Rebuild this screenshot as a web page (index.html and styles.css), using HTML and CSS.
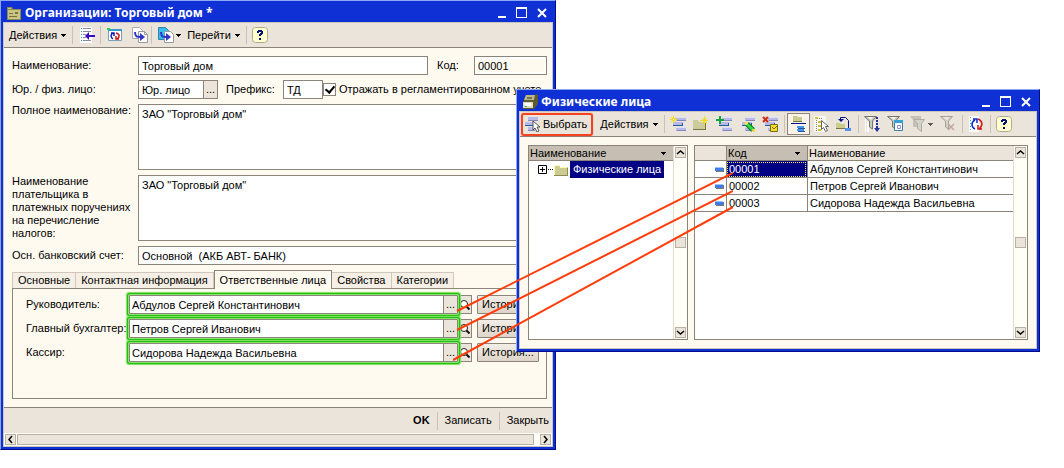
FILE: index.html
```html
<!DOCTYPE html>
<html lang="ru">
<head>
<meta charset="utf-8">
<title>Организации: Торговый дом</title>
<link rel="stylesheet" href="styles.css">
</head>
<body>
<svg class="defs" aria-hidden="true">
  <symbol id="folder" viewBox="0 0 16 16"><path d="M1 3h5l1 2h8v9H1z" fill="#cbcb92"/><path d="M1 3h5v1H1zM1 4h1v9H1zM7 5h7v1H7z" fill="#ffffae"/><path d="M1 13h14v1H1zM14 6h1v8h-1z" fill="#8b8b58"/></symbol>
  <symbol id="item" viewBox="0 0 16 16"><path d="M6 1h10v4H6zM6 11h10v4H6z" fill="#b9b9e9"/><path d="M6 1h10v1H6zM6 11h10v1H6z" fill="#dedefd"/><path d="M7 4h9v1H7zM7 14h9v1H7z" fill="#8584bb"/><path d="M3 6h10v4H3z" fill="#b8b8e8"/><path d="M3 9h10v1H3zM12 7h1v3h-1z" fill="#1e5c9c"/></symbol>
  <symbol id="page" viewBox="0 0 16 16"><path d="M.5.5h7l3 3v8H.5z" fill="#fff" stroke="#aaa" /><path d="M6.500 4.500h6l3 3v8h-9z" fill="#fff" stroke="#999"/><path d="M12.500 4.500v3h3" fill="none" stroke="#999"/><path d="M3 5c0 5 2 5 6 5" fill="none" stroke="#3036c9" stroke-width="2"/><path d="M8 6l5 4-5 4z" fill="#3036c9"/></symbol>
  <symbol id="funnel" viewBox="0 0 16 16"><path d="M.5.5h12L8.500 5v8l-3-2V5z" fill="#c9c8c1" stroke="#77766c"/><path d="M3 1h6L7 4z" fill="#f3f2ed"/></symbol>
  <symbol id="help" viewBox="0 0 16 16"><rect x=".5" y=".5" width="15" height="15" rx="3" fill="#ffffca" stroke="#aaa99c"/><path d="M5 6V4h1V3h4v1h1v3h-1v1H9v1H7V7h1V6h1V5H7v1zM7 11h2v2H7z" fill="#001276"/></symbol>
  <symbol id="refresh" viewBox="0 0 16 16"><path d="M7 13C3 11 3 6 7 4M5 3h4v4" fill="none" stroke="#0a25d0" stroke-width="1.500"/><path d="M10 3c5 2 5 7 1 10M14 13h-4V9" fill="none" stroke="#d01414" stroke-width="1.500"/></symbol>
  <symbol id="down" viewBox="0 0 5 3"><path d="M0 0h5v1H4v1H3v1H2V2H1V1H0z" fill="currentColor"/></symbol>
  <symbol id="loupe" viewBox="0 0 12 12"><circle cx="5" cy="5" r="3.500" fill="#fff" stroke="#222"/><path d="M7.500 7.500l3 3" stroke="#111" stroke-width="2"/></symbol>
  <symbol id="bullet" viewBox="0 0 9 5"><path d="M1 1h8v4H1z" fill="#777"/><path d="M0 0h8v4H0z" fill="#3f7ce8"/><path d="M0 0h8v1H0z" fill="#9cc6ff"/></symbol>
  <symbol id="min" viewBox="0 0 12 12"><path d="M2 9h8v2H2z" fill="#fff"/></symbol>
  <symbol id="max" viewBox="0 0 12 12"><path d="M0 0h11v11H0zM1 2v8h9V2z" fill="#fff" fill-rule="evenodd"/></symbol>
  <symbol id="close" viewBox="0 0 12 12"><path d="M2 2l8 8M10 2l-8 8" stroke="#fff" stroke-width="2"/></symbol>
</svg>

<main class="desktop">
  <section class="window window-org" aria-label="Организации">
    <header class="titlebar">
      <svg class="icon" viewBox="0 0 16 16"><path d="M1 2h5l1 2h8v11H1z" fill="#8f8b4b"/><path d="M2 3h3v1H2zM2 5h12v9H2z" fill="#c7c484"/><path d="M3 8h4v1H3zM3 11h8v1H3zM9 7h3v2H9z" fill="#77743b"/></svg>
      <h1>Организации: Торговый дом *</h1>
      <div class="controls">
        <button aria-label="Свернуть"><svg><use href="#min"/></svg></button>
        <button aria-label="Развернуть"><svg><use href="#max"/></svg></button>
        <button aria-label="Закрыть окно"><svg><use href="#close"/></svg></button>
      </div>
    </header>
    <div class="client">
      <div class="toolbar">
        <button class="menu">Действия<svg class="arrow"><use href="#down"/></svg></button>
        <i class="sep"></i>
        <button class="tool" aria-label="Найти в списке"><svg class="icon" viewBox="0 0 16 16"><path d="M1 0h12v16H1z" fill="#fff"/><path d="M2 1h1v1H2zM2 4h1v1H2zM2 7h1v1H2zM2 10h1v1H2zM2 13h1v1H2z" fill="#16a0d0"/><path d="M4 1h8v1H4zM4 4h8v1H4zM4 7h3v1H4zM4 10h3v1H4zM4 13h8v1H4z" fill="#8b8b9b"/><path d="M16 8v2h-6v3L6 9l4-4v3z" fill="#3709c5"/></svg></button>
        <i class="sep"></i>
        <button class="tool" aria-label="Перечитать"><svg class="icon" viewBox="0 0 16 16"><path d="M1.500 2.500h13v11h-13z" fill="#fff" stroke="#77a0bb"/><path d="M1 2h14v2H1z" fill="#369bd0"/><path d="M0 1h3v2H0z" fill="#28d444"/><path d="M6 12C3 10 4 7 6 6M4 6h3v3" fill="none" stroke="#111cc0" stroke-width="1.500"/><path d="M9 6c4 1 4 4 1 6M12 12H9V9" fill="none" stroke="#c91414" stroke-width="1.500"/></svg></button>
        <button class="tool" aria-label="Скопировать"><svg class="icon"><use href="#page"/></svg></button>
        <i class="sep"></i>
        <button class="tool with-arrow" aria-label="Ввести на основании"><svg class="icon" viewBox="0 0 16 16"><path d="M.5.5h7l3 3v9H.5z" fill="#32bcf2" stroke="#3980a5"/><path d="M6.500 4.500h6l3 3v8h-9z" fill="#fff" stroke="#999"/><path d="M3 5c0 5 2 5 5 5" fill="none" stroke="#3036c9" stroke-width="2"/><path d="M8 6l5 4-5 4z" fill="#3036c9"/></svg><svg class="arrow"><use href="#down"/></svg></button>
        <button class="menu">Перейти<svg class="arrow"><use href="#down"/></svg></button>
        <i class="sep"></i>
        <button class="tool" aria-label="Справка"><svg class="icon"><use href="#help"/></svg></button>
      </div>
      <form class="form">
        <div class="row">
          <label class="caption" for="name">Наименование:</label>
          <input class="field grow" id="name" value="Торговый дом">
          <label class="code-label" for="code">Код:</label>
          <input class="field code" id="code" value="00001" readonly>
        </div>
        <div class="row">
          <label class="caption" for="kind">Юр. / физ. лицо:</label>
          <div class="combo kind"><input class="field" id="kind" value="Юр. лицо"><button type="button" class="dots" aria-label="Выбрать вид">...</button></div>
          <label class="prefix-label" for="prefix">Префикс:</label>
          <input class="field prefix" id="prefix" value="ТД">
          <label class="check"><input type="checkbox" checked>Отражать в регламентированном учете</label>
        </div>
        <div class="row">
          <label class="caption top" for="full">Полное наименование:</label>
          <textarea class="field grow" id="full">ЗАО "Торговый дом"</textarea>
        </div>
        <div class="row">
          <label class="caption top" for="payer">Наименование плательщика в платежных поручениях на перечисление налогов:</label>
          <textarea class="field grow" id="payer">ЗАО "Торговый дом"</textarea>
        </div>
        <div class="row">
          <label class="caption" for="bank">Осн. банковский счет:</label>
          <input class="field grow" id="bank" value="Основной  (АКБ АВТ- БАНК)">
        </div>
        <div class="tabs" role="tablist">
          <button type="button" role="tab">Основные</button>
          <button type="button" role="tab">Контактная информация</button>
          <button type="button" role="tab" class="active" aria-selected="true">Ответственные лица</button>
          <button type="button" role="tab">Свойства</button>
          <button type="button" role="tab">Категории</button>
        </div>
        <div class="pane" role="tabpanel">
          <div class="row">
            <label class="caption" for="head">Руководитель:</label>
            <div class="combo marked"><input class="field" id="head" value="Абдулов Сергей Константинович"><button type="button" class="dots" aria-label="Выбрать руководителя">...</button></div>
            <button type="button" class="look" aria-label="Открыть"><svg><use href="#loupe"/></svg></button>
            <button type="button" class="history">История...</button>
          </div>
          <div class="row">
            <label class="caption" for="chief">Главный бухгалтер:</label>
            <div class="combo marked"><input class="field" id="chief" value="Петров Сергей Иванович"><button type="button" class="dots" aria-label="Выбрать бухгалтера">...</button></div>
            <button type="button" class="look" aria-label="Открыть"><svg><use href="#loupe"/></svg></button>
            <button type="button" class="history">История...</button>
          </div>
          <div class="row">
            <label class="caption" for="cashier">Кассир:</label>
            <div class="combo marked"><input class="field" id="cashier" value="Сидорова Надежда Васильевна"><button type="button" class="dots" aria-label="Выбрать кассира">...</button></div>
            <button type="button" class="look" aria-label="Открыть"><svg><use href="#loupe"/></svg></button>
            <button type="button" class="history">История...</button>
          </div>
        </div>
      </form>
      <footer class="actions">
        <button class="ok">OK</button><i class="sep"></i><button>Записать</button><i class="sep"></i><button>Закрыть</button>
      </footer>
      <div class="hscroll">
        <button aria-label="Влево"><svg viewBox="0 0 9 9"><path d="M6 1L3 4.500 6 8" fill="none" stroke="#000" stroke-width="1.500"/></svg></button>
        <div class="thumb"></div>
        <button aria-label="Вправо"><svg viewBox="0 0 9 9"><path d="M3 1l3 3.500L3 8" fill="none" stroke="#000" stroke-width="1.500"/></svg></button>
      </div>
    </div>
  </section>

  <section class="window window-people" aria-label="Физические лица">
    <header class="titlebar">
      <svg class="icon" viewBox="0 0 16 16"><path d="M4 1h9l3-1v10l-4 5H1V8z" fill="#5c5a32"/><path d="M4 1h9l-1 5H2z" fill="#bab78c"/><path d="M1 8h10v6H1z" fill="#dcdab8"/><path d="M5 3h5v2H5z" fill="#77744e"/><path d="M2 9h7l1 3H3z" fill="#fff"/><path d="M3 12h2v1H3z" fill="#32b84a"/></svg>
      <h2>Физические лица</h2>
      <div class="controls">
        <button aria-label="Свернуть"><svg><use href="#min"/></svg></button>
        <button aria-label="Развернуть"><svg><use href="#max"/></svg></button>
        <button aria-label="Закрыть окно"><svg><use href="#close"/></svg></button>
      </div>
    </header>
    <div class="client">
      <div class="toolbar people-tools">
        <button class="choose"><svg class="icon" viewBox="0 0 16 16"><path d="M3 1h10v3H3zM0 6h9v3H0zM3 11h9v3H3z" fill="#b9b9e9"/><path d="M3 4h10v1H3zM3 14h7v1H3z" fill="#8584bb"/><path d="M0 9h9v1H0z" fill="#1e5c9c"/><path d="M8 5v9l2-2 2 4 2-1-2-4h3z" fill="#fff" stroke="#555"/></svg>Выбрать</button>
        <button class="menu">Действия<svg class="arrow"><use href="#down"/></svg></button>
        <i class="sep"></i>
        <button class="tool" aria-label="Добавить"><svg class="icon" viewBox="0 0 16 16"><use href="#item"/><path d="M3.500 0v7M0 3.500h7M1 1l5 5M6 1L1 6" stroke="#f3dc10"/><path d="M3 3h1v1H3z" fill="#fff"/></svg></button>
        <button class="tool" aria-label="Новая группа"><svg class="icon" viewBox="0 0 16 16"><path d="M0 4h5l1 2h6v8H0z" fill="#cbcb9c"/><path d="M0 13h13v1H0zM12 7h1v7h-1z" fill="#77774a"/><path d="M11.500 0v9M7 4.500h8M9 2l5 5M14 2L9 7" stroke="#eddc22"/></svg></button>
        <button class="tool" aria-label="Скопировать"><svg class="icon" viewBox="0 0 16 16"><use href="#item"/><path d="M3 0h2v3h3v2H5v3H3V5H0V3h3z" fill="#11a43c"/></svg></button>
        <button class="tool" aria-label="Изменить"><svg class="icon" viewBox="0 0 16 16"><use href="#item"/><path d="M8 8l6 6" stroke="#126a20" stroke-width="5"/><path d="M8 8l6 6" stroke="#28df3c" stroke-width="3"/><path d="M6 6h3v2H8v1H6zM13 13h3v3h-2z" fill="#f1df45"/></svg></button>
        <button class="tool" aria-label="Пометить на удаление"><svg class="icon" viewBox="0 0 16 16"><use href="#item"/><path d="M1 1l5 5M6 1L1 6" stroke="#d12b12" stroke-width="2"/><path d="M8.500 8.500h7v7h-7z" fill="#f2dd2b" stroke="#777019"/><path d="M10 11l2 2 3-3" fill="none" stroke="#77701f"/></svg></button>
        <i class="sep"></i>
        <button class="tool pressed" aria-label="Иерархия"><svg class="icon" viewBox="0 0 16 16"><path d="M3 0h4l1 1h4v5H3z" fill="#cbcb8c"/><path d="M3 5h9v1H3z" fill="#77774a"/><path d="M1 7h15v1H1z" fill="#001187"/><path d="M7 10h7v2H7zM7 13h7v2H7z" fill="#4693ee"/><path d="M8 12h7v1H8zM8 15h7v1H8z" fill="#2854a5"/></svg></button>
        <button class="tool" aria-label="Переместить"><svg class="icon" viewBox="0 0 16 16"><path d="M1 0h12v16H1z" fill="#f8f7f2"/><path d="M2 1h3v2H2zM5 5h3v2H5zM5 9h3v2H5zM5 13h3v2H5z" fill="#d4bf28"/><path d="M3.500 4v11M6 2.500h4M8 10.500h3" stroke="#888" stroke-dasharray="1 1"/><path d="M8.500 4.500v9l2-2 2 4 2-1-2-4h3z" fill="#fff" stroke="#666"/></svg></button>
        <button class="tool" aria-label="На уровень вверх"><svg class="icon" viewBox="0 0 16 16"><path d="M0 7h4l1 1h4v5H0z" fill="#cbcb8c"/><path d="M0 12h9v1H0z" fill="#77774a"/><path d="M4.500 3V1.500h5l3 3V12" fill="none" stroke="#001187"/><path d="M2 3h6L5 6z" fill="#001187"/><path d="M9 12h6v3H9z" fill="#5595f0"/></svg></button>
        <i class="sep"></i>
        <button class="tool" aria-label="Отбор и сортировка"><svg class="icon" viewBox="0 0 16 16"><path d="M1 3h1v13H1zM3 6h2v10H3zM10 6h1v10h-1z" fill="#fff"/><use href="#funnel"/><path d="M13 1v11" stroke="#202d9e" stroke-width="2" stroke-dasharray="2 1"/><path d="M10 12h6l-3 4z" fill="#26349e"/></svg></button>
        <button class="tool" aria-label="Отбор по значению"><svg class="icon" viewBox="0 0 16 16"><use href="#funnel"/><path d="M7.500 5.500h8v9h-8z" fill="#fff" stroke="#347eac"/><path d="M7 4h9v3H7z" fill="#33a0d6"/><path d="M10.500 9.500h3v3h-3z" fill="none" stroke="#8c8cd0"/></svg></button>
        <button class="tool with-arrow disabled" aria-label="История отборов" disabled><svg class="icon" viewBox="0 0 16 16"><path d="M0 0h11v3H8v8H3V4z" fill="#aaa99f"/><path d="M3.500 3.500h11l-3 4v8l-4-3v-5z" fill="#c8c7bd" stroke="#888"/></svg><svg class="arrow"><use href="#down"/></svg></button>
        <button class="tool disabled" aria-label="Отключить отбор" disabled><svg class="icon" viewBox="0 0 16 16"><use href="#funnel"/><path d="M8 8l6 6M14 8l-6 6" stroke="#a67f7a" stroke-width="1.500"/></svg></button>
        <i class="sep"></i>
        <button class="tool" aria-label="Обновить"><svg class="icon" viewBox="0 0 16 16"><path d="M1 0h10v16H1z" fill="#fff"/><path d="M2.500 1v15" stroke="#23a0d0" stroke-dasharray="1 2"/><use href="#refresh"/></svg></button>
        <i class="sep"></i>
        <button class="tool" aria-label="Справка"><svg class="icon"><use href="#help"/></svg></button>
      </div>
      <div class="panels">
        <div class="panel tree">
          <div class="tree-body">
            <div class="tree-head">Наименование<svg class="arrow"><use href="#down"/></svg></div>
            <div class="node">
              <svg class="expander" viewBox="0 0 15 9"><path d="M.5.5h8v8h-8z" fill="#fff" stroke="#000"/><path d="M2 4h5v1H2zM4 2h1v5H4zM10 4h1v1h-1zM12 4h1v1h-1zM14 4h1v1h-1z"/></svg>
              <svg class="icon"><use href="#folder"/></svg>
              <span>Физические лица</span>
            </div>
          </div>
          <div class="vscroll">
            <button aria-label="Вверх"><svg viewBox="0 0 9 9"><path d="M1 6l3.500-3L8 6" fill="none" stroke="#000" stroke-width="1.500"/></svg></button><div class="thumb"></div><button aria-label="Вниз"><svg viewBox="0 0 9 9"><path d="M1 3l3.500 3L8 3" fill="none" stroke="#000" stroke-width="1.500"/></svg></button>
          </div>
        </div>
        <div class="panel list">
          <table>
            <colgroup><col class="c-mark"><col class="c-code"><col></colgroup>
            <thead><tr><th></th><th class="sorted"><span>Код<svg class="arrow"><use href="#down"/></svg></span></th><th>Наименование</th></tr></thead>
            <tbody>
              <tr><td class="mark"><svg><use href="#bullet"/></svg></td><td class="selected">00001</td><td>Абдулов Сергей Константинович</td></tr>
              <tr><td class="mark"><svg><use href="#bullet"/></svg></td><td>00002</td><td>Петров Сергей Иванович</td></tr>
              <tr><td class="mark"><svg><use href="#bullet"/></svg></td><td>00003</td><td>Сидорова Надежда Васильевна</td></tr>
            </tbody>
          </table>
          <div class="vscroll">
            <button aria-label="Вверх"><svg viewBox="0 0 9 9"><path d="M1 6l3.500-3L8 6" fill="none" stroke="#000" stroke-width="1.500"/></svg></button><div class="thumb"></div><button aria-label="Вниз"><svg viewBox="0 0 9 9"><path d="M1 3l3.500 3L8 3" fill="none" stroke="#000" stroke-width="1.500"/></svg></button>
          </div>
        </div>
      </div>
    </div>
  </section>

  <svg class="links" viewBox="0 0 280 200" aria-hidden="true"><path d="M4 146L280 8M4 165L280 26M0 195L280 42" fill="none" stroke="#ff3c0a" stroke-width="2"/></svg>
</main>
</body>
</html>
```
FILE: styles.css
```css
* { box-sizing: border-box; }

body {
  margin: 0;
  background: #fff;
  color: #000;
  font: 11px/13px "Liberation Sans", Arial, sans-serif;
}

button, input, textarea { font: inherit; color: inherit; margin: 0; border-radius: 0; }
button { padding: 0; border: 0; background: none; white-space: nowrap; }
svg { display: block; flex: none; }

.defs { position: absolute; width: 0; height: 0; }
.desktop { position: relative; min-width: 1000px; min-height: 468px; overflow: hidden; }

/* Windows */
.window {
  position: absolute;
  isolation: isolate;
  padding: 0 2px 2px;
  border: 1px solid;
  border-color: #8aa8f4 #000c85 #000c85 #8aa8f4;
  background: #0f30d5;
}
.window-org { top: 0; left: 0; right: 508px; }
.window-people { top: 89px; right: 24px; width: 524px; }
.client { border: 1px solid #c8c5bd; background: #fffaf0; }

.titlebar { display: flex; align-items: center; height: 21px; padding: 2px 5px 0 3px; gap: 3px; }
.titlebar h1, .titlebar h2 {
  flex: 1;
  margin: 0;
  color: #fff;
  font: bold 12px/18px "Noto Sans", Verdana, sans-serif;
  white-space: nowrap;
}
.controls { display: flex; gap: 8px; }
.controls svg { width: 12px; height: 12px; }

.icon { width: 16px; height: 16px; }
.arrow { width: 5px; height: 3px; }

.toolbar {
  display: flex;
  align-items: center;
  height: 25px;
  padding-left: 4px;
  border-bottom: 1px solid #8c8478;
  background: #ebe4da;
}
.sep { flex: none; width: 1px; height: 18px; background: #c9c1b5; }
.menu { display: flex; align-items: center; gap: 4px; padding: 0 6px 0 1px; }
.tool { display: flex; align-items: center; justify-content: center; height: 22px; width: 27px; }
.tool + .tool { width: 23px; }
.tool.with-arrow { width: 34px; gap: 2px; }
.disabled { opacity: .6; }

.people-tools { padding-left: 1px; }
.people-tools .tool { width: 23px; }
.people-tools .with-arrow { width: 30px; }
.people-tools .sep { margin: 0 2px; }
.people-tools .menu { margin-left: 6px; padding-right: 4px; }
.choose {
  display: flex;
  align-items: center;
  gap: 2px;
  height: 23px;
  padding: 0 4px 0 2px;
  border: 2px solid #f24420;
  border-radius: 3px;
  box-shadow: 0 0 1px #f24420;
}
.people-tools .pressed { border: 1px solid #8c8478; background: #f8f2e8; }

/* Form */
.form { display: flex; flex-direction: column; gap: 5px; padding: 8px 5px 8px 8px; }
.row { display: flex; align-items: center; }
.caption { flex: none; width: 126px; padding-right: 6px; }
.caption.top { align-self: flex-start; }
.field {
  min-width: 0;
  height: 19px;
  padding: 0 3px;
  border: 1px solid #8c8478;
  background: #fff;
  outline: 0;
  white-space: pre;
}
textarea.field { height: 66px; padding-top: 3px; resize: none; overflow: hidden; }
.grow { flex: 1; }
.code-label { flex: none; width: 46px; padding-left: 9px; }
.code { width: 73px; background: #fffaf0; box-shadow: inset 0 0 0 2px #fff; }
.combo { display: flex; border: 1px solid #8c8478; background: #fff; }
.combo .field { flex: 1; height: 17px; border: 0; }
.marked .field { padding-left: 2px; }
.dots { width: 14px; border-left: 1px solid #8c8478; background: #ebe4da; }
.kind { flex: none; width: 80px; }
.prefix-label { flex: none; width: 65px; padding-left: 8px; }
.prefix { flex: none; width: 40px; }
.check { display: flex; align-items: center; gap: 3px; white-space: nowrap; }
.check input {
  appearance: none;
  width: 13px;
  height: 13px;
  border: 1px solid #8c8478;
  background: #fff;
}
.check input:checked::after {
  content: "";
  display: block;
  width: 4px;
  height: 7px;
  margin: 0 auto;
  border: solid #000;
  border-width: 0 2px 2px 0;
  transform: rotate(40deg);
}

.tabs { display: flex; align-items: flex-end; height: 18px; }
.tabs button {
  height: 16px;
  padding: 0 5px;
  border: 1px solid #cfc7bb;
  border-width: 1px 1px 0;
  background: #f5efe5;
}
.tabs button + button { border-left: 0; }
.tabs .active {
  z-index: 1;
  height: 19px;
  margin-bottom: -1px;
  border-color: #8c8478;
  background: #fffaf0;
}
.tabs button + .active { border-left: 1px solid #8c8478; }
.pane {
  display: flex;
  flex-direction: column;
  gap: 5px;
  min-height: 111px;
  margin-top: -5px;
  padding: 6px 7px 6px 13px;
  border: 1px solid #8c8478;
}
.pane .caption { width: 103px; padding: 0; white-space: nowrap; }
.marked {
  z-index: 1;
  flex: 1;
  border-radius: 1px;
  box-shadow: 0 0 0 1px #86e56c, 0 0 0 2px #25bd0e, 0 0 1px 3px #7be062;
}
.look {
  display: flex;
  align-items: center;
  justify-content: center;
  width: 14px;
  height: 19px;
  border: 1px solid #8c8478;
  border-left: 0;
  background: #ebe4da;
}
.look svg { width: 12px; height: 12px; }
.history {
  width: 62px;
  height: 19px;
  margin-left: 5px;
  border: 1px solid #8c8478;
  border-radius: 1px;
  background: linear-gradient(#f3eee6, #ddd5c9);
}

.actions {
  display: flex;
  align-items: center;
  justify-content: flex-end;
  gap: 7px;
  height: 26px;
  padding-right: 3px;
  border-top: 1px solid #8c8478;
  background: #ebe4da;
}
.ok { font-weight: bold; }

/* Scroll bars */
.hscroll { display: flex; gap: 1px; height: 13px; padding: 1px; background: #fffff8; }
.thumb { border: 1px solid #b9b1a4; background: #ebe4da; }
.hscroll .thumb { flex: 1; margin-right: 5px; }
.hscroll button, .vscroll button {
  display: flex;
  align-items: center;
  justify-content: center;
  width: 11px;
  height: 11px;
  border: 1px solid #b9b1a4;
  background: #ebe4da;
}
.hscroll svg, .vscroll svg { width: 9px; height: 9px; }
.vscroll {
  display: flex;
  flex: none;
  flex-direction: column;
  align-items: center;
  justify-content: space-between;
  width: 14px;
  padding: 1px 0;
  border-left: 1px solid #e0dcd0;
  background: #fffff8;
}
.vscroll .thumb { width: 11px; height: 11px; }

/* Panels */
.panels { display: flex; gap: 6px; padding: 8px; }
.panel { display: flex; min-height: 195px; border: 1px solid #8c8478; background: #fff; }
.tree { width: 160px; }
.tree-body { flex: 1; }
.tree-head {
  display: flex;
  align-items: center;
  justify-content: space-between;
  height: 15px;
  padding: 0 7px 0 1px;
  border-bottom: 1px solid #8c8478;
  background: #c6beb2;
}
.node { display: flex; align-items: center; height: 17px; padding-left: 9px; }
.expander { width: 15px; height: 9px; }
.node span { margin-left: 1px; padding: 2px 3px; background: #000084; color: #fff; white-space: nowrap; }

.list { flex: 1; }
table { flex: 1; align-self: flex-start; border-spacing: 0; table-layout: fixed; width: 100%; }
.c-mark { width: 31px; }
.c-code { width: 81px; }
th, td {
  height: 17px;
  padding: 0 2px;
  border: solid #8c8478;
  border-width: 0 0 1px 1px;
  font-weight: normal;
  text-align: left;
  white-space: nowrap;
}
th { height: 15px; padding: 0 1px; background: #ebe4da; }
th:first-child, td:first-child { border-left: 0; }
th.sorted { background: #c6beb2; }
th span { display: flex; align-items: center; justify-content: space-between; padding-right: 6px; }
.mark svg { width: 9px; height: 5px; margin-left: auto; }
td.selected { background: #000084; color: #fff; outline: 1px dotted #e8e060; outline-offset: -2px; }

.links { position: absolute; top: 165px; right: 331px; width: 280px; height: 200px; }
```
